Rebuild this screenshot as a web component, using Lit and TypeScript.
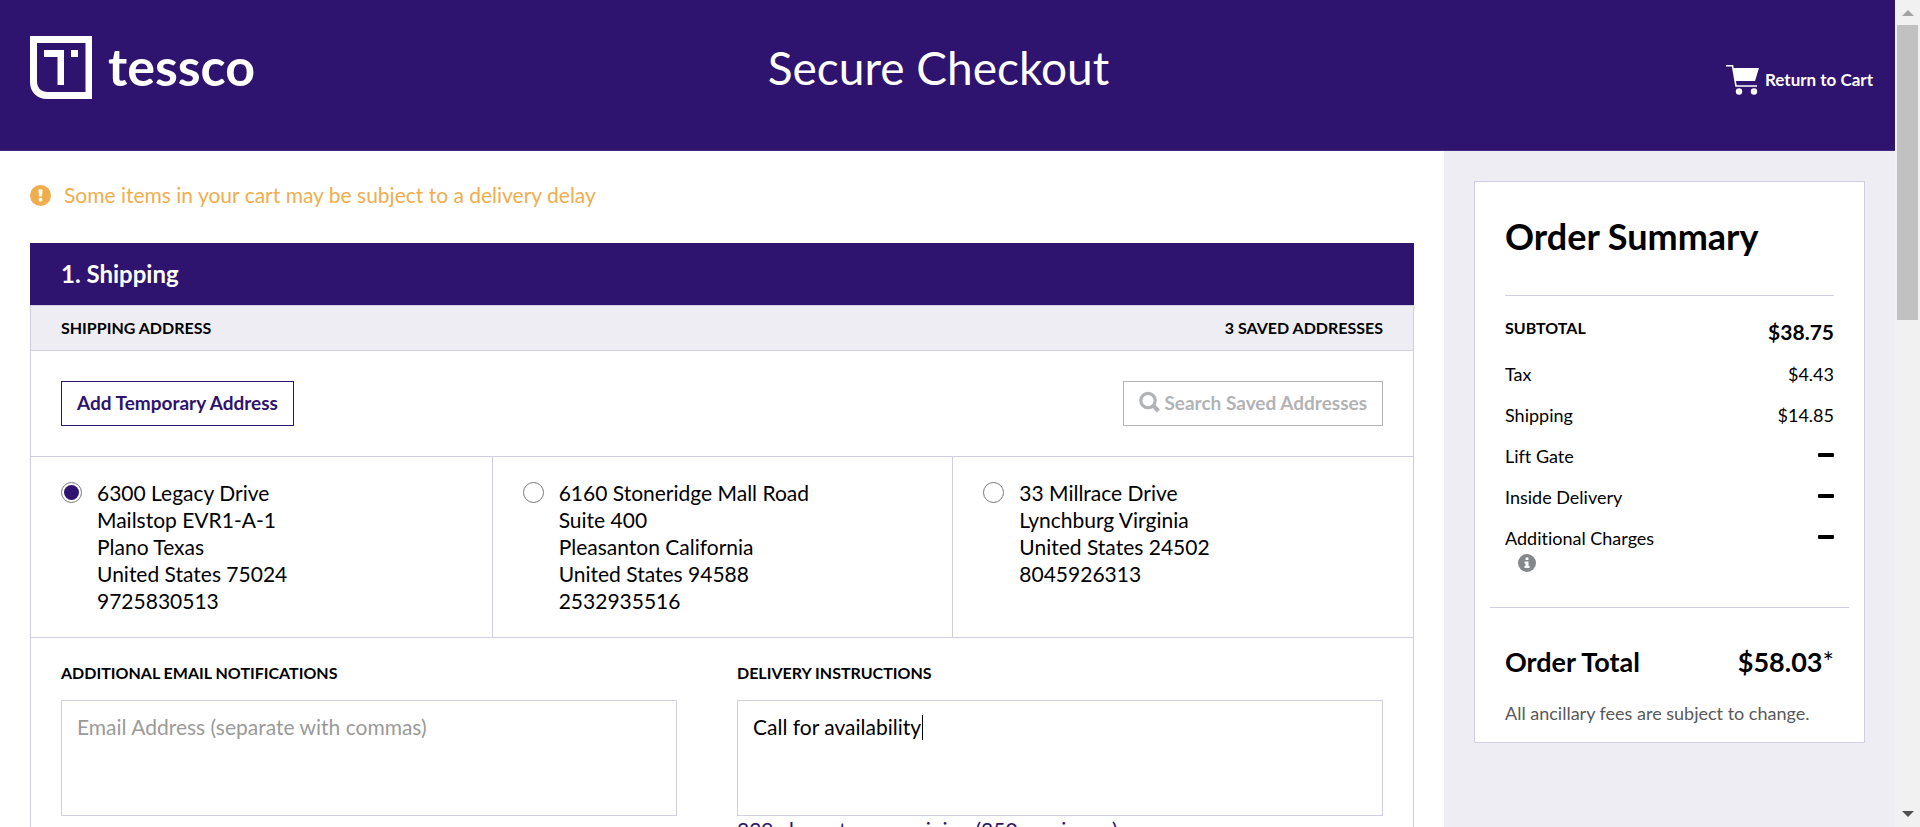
import { LitElement, html, css } from "lit";
import { customElement, query, state } from "lit/decorators.js";

interface Address {
  id: string;
  lines: string[];
}

const ADDRESSES: Address[] = [
  {
    id: "plano",
    lines: ["6300 Legacy Drive", "Mailstop EVR1-A-1", "Plano Texas", "United States 75024", "9725830513"],
  },
  {
    id: "pleasanton",
    lines: ["6160 Stoneridge Mall Road", "Suite 400", "Pleasanton California", "United States 94588", "2532935516"],
  },
  {
    id: "lynchburg",
    lines: ["33 Millrace Drive", "Lynchburg Virginia", "United States 24502", "8045926313"],
  },
];

const MAX_INSTRUCTIONS = 250;

const base = css`
  * {
    box-sizing: border-box;
  }
  h1,
  h2,
  h3,
  p,
  dl,
  dd,
  dt {
    margin: 0;
  }
  svg {
    display: block;
    flex: none;
  }
`;

@customElement("checkout-header")
export class CheckoutHeader extends LitElement {
  static styles = [
    base,
    css`
      :host {
        display: grid;
        grid-template-columns: 1fr auto 1fr;
        padding: 36px 22px 50px 30px;
        background: #2e136f;
        border-bottom: 1px solid #47297f;
        color: #fff;
      }
      .brand {
        display: flex;
        align-items: center;
        justify-self: start;
        gap: 15px;
        height: 64px;
        color: inherit;
        text-decoration: none;
        font-size: 52px;
        line-height: 60px;
        font-weight: 700;
      }
      .name {
        padding-bottom: 4px;
      }
      .title {
        padding-right: 26px;
        font-size: 46px;
        line-height: 64px;
        font-weight: 400;
      }
      .back {
        display: flex;
        align-items: center;
        justify-self: end;
        align-self: end;
        gap: 5px;
        padding-bottom: 4px;
        color: inherit;
        text-decoration: none;
        font-size: 17px;
        line-height: 32px;
        font-weight: 700;
      }
    `,
  ];

  render() {
    return html`
      <a class="brand" href="#home">
        <svg width="63" height="64" viewBox="0 0 63 64" fill="#fff" aria-hidden="true">
          <path
            fill-rule="evenodd"
            d="M0 0H62V63H17C7 63 0 56 0 46ZM7 7V45C7 52 11 56 18 56H55.500V7Z"
          />
          <path d="M14 14H34V49H27.500V21H14Z" />
          <path d="M41 14H48V21H41Z" />
        </svg>
        <span class="name">tessco</span>
      </a>
      <h1 class="title">Secure Checkout</h1>
      <a class="back" href="#cart">
        <svg width="34" height="32" viewBox="0 0 34 32" aria-hidden="true">
          <path d="M0 1.700H6.500L10 22H31" fill="none" stroke="#fff" stroke-width="1.600" />
          <path d="M7 4H33L29 17H9.300Z" fill="#fff" />
          <circle cx="13" cy="27.500" r="3.200" fill="#fff" />
          <circle cx="28" cy="27.500" r="3.200" fill="#fff" />
        </svg>
        <span>Return to Cart</span>
      </a>
    `;
  }
}

@customElement("shipping-panel")
export class ShippingPanel extends LitElement {
  @state() private selected = "plano";
  @state() private instructions = "Call for availability";
  @state() private caretOffset = 0;
  @query("#instructions") private box!: HTMLTextAreaElement;

  static styles = [
    base,
    css`
      :host {
        display: block;
      }
      .heading {
        padding: 0 31px;
        background: #2e136f;
        color: #fff;
        font-size: 24px;
        line-height: 62px;
        font-weight: 700;
      }
      .body {
        border: 1px solid #d0cee3;
        border-bottom: 0;
      }
      .subhead {
        display: flex;
        justify-content: space-between;
        padding: 0 30px;
        background: #eeedf3;
        border-bottom: 1px solid #d0cee3;
        font-size: 16px;
        line-height: 44px;
        font-weight: 700;
      }
      .tools {
        display: flex;
        justify-content: space-between;
        padding: 30px;
        border-bottom: 1px solid #d0cee3;
      }
      .btn {
        display: flex;
        align-items: center;
        gap: 4px;
        height: 45px;
        padding: 0 15px 2px;
        background: #fff;
        border: 1px solid #2e136f;
        color: #2e136f;
        font: inherit;
        font-size: 19px;
        font-weight: 700;
      }
      .btn:disabled {
        border-color: #b2b3b5;
        color: #b2b3b5;
      }
      .addresses {
        display: grid;
        grid-template-columns: repeat(3, 1fr);
        margin: 0;
        padding: 0;
        border: 0;
        border-bottom: 1px solid #d0cee3;
      }
      .address {
        display: flex;
        align-items: flex-start;
        gap: 15px;
        padding: 22px 30px 23px;
        font-size: 21px;
        line-height: 27px;
      }
      .address + .address {
        border-left: 1px solid #d0cee3;
      }
      .line {
        display: block;
      }
      .radio {
        appearance: none;
        flex: none;
        width: 21px;
        height: 21px;
        margin: 3px 0;
        padding: 2px;
        border: 1px solid #77787c;
        border-radius: 50%;
        background: #fff;
      }
      .radio:checked {
        background: #2e136f content-box;
      }
      .fields {
        display: grid;
        grid-template-columns: calc(50% - 45px) 1fr;
        gap: 60px;
        padding: 21px 30px 60px;
      }
      .label {
        display: block;
        margin-bottom: 14px;
        font-size: 16px;
        line-height: 27px;
        font-weight: 700;
      }
      .control {
        position: relative;
      }
      .area {
        display: block;
        width: 100%;
        height: 116px;
        padding: 12px 15px;
        border: 1px solid #d0cee3;
        border-radius: 0;
        outline: 0;
        resize: none;
        background: #fff;
        color: #000;
        caret-color: transparent;
        font: inherit;
        font-size: 21px;
        line-height: 27px;
      }
      .area::placeholder {
        color: #9a9a9a;
        opacity: 1;
      }
      .caret {
        position: absolute;
        top: 15px;
        width: 1px;
        height: 25px;
        background: #000;
        pointer-events: none;
      }
      .remaining {
        color: #2e136f;
        font-size: 21px;
        line-height: 27px;
      }
    `,
  ];

  firstUpdated() {
    this.placeCaret();
  }

  private placeCaret() {
    const style = getComputedStyle(this.box);
    const ctx = document.createElement("canvas").getContext("2d")!;
    ctx.font = `${style.fontWeight} ${style.fontSize} ${style.fontFamily}`;
    this.caretOffset = Math.round(16 + ctx.measureText(this.instructions).width);
  }

  private onInput(e: Event) {
    this.instructions = (e.target as HTMLTextAreaElement).value;
    this.placeCaret();
  }

  render() {
    return html`
      <h2 class="heading">1. Shipping</h2>
      <div class="body">
        <div class="subhead">
          <span>SHIPPING ADDRESS</span>
          <span>3 SAVED ADDRESSES</span>
        </div>
        <div class="tools">
          <button class="btn" type="button">Add Temporary Address</button>
          <button class="btn" type="button" disabled>
            <svg width="21" height="24" viewBox="0 0 21 24" fill="none" stroke="currentColor" aria-hidden="true">
              <circle cx="9" cy="9.500" r="7.200" stroke-width="3.200" />
              <path d="M14 14.500L19.500 20" stroke-width="4" />
            </svg>
            <span>Search Saved Addresses</span>
          </button>
        </div>
        <fieldset class="addresses" aria-label="Saved addresses">
          ${ADDRESSES.map(
            (a) => html`
              <label class="address" for=${a.id}>
                <input
                  class="radio"
                  type="radio"
                  name="address"
                  id=${a.id}
                  .checked=${this.selected === a.id}
                  @change=${() => (this.selected = a.id)}
                />
                <span>${a.lines.map((l) => html`<span class="line">${l}</span>`)}</span>
              </label>
            `
          )}
        </fieldset>
        <div class="fields">
          <div>
            <label class="label" for="emails">ADDITIONAL EMAIL NOTIFICATIONS</label>
            <textarea class="area" id="emails" placeholder="Email Address (separate with commas)"></textarea>
          </div>
          <div>
            <label class="label" for="instructions">DELIVERY INSTRUCTIONS</label>
            <div class="control">
              <textarea
                class="area"
                id="instructions"
                maxlength=${MAX_INSTRUCTIONS}
                .value=${this.instructions}
                @input=${this.onInput}
              ></textarea>
              <span class="caret" style="left:${this.caretOffset}px"></span>
            </div>
            <p class="remaining">
              ${MAX_INSTRUCTIONS - this.instructions.length} characters remaining (${MAX_INSTRUCTIONS} maximum)
            </p>
          </div>
        </div>
      </div>
    `;
  }
}

@customElement("order-summary")
export class OrderSummary extends LitElement {
  static styles = [
    base,
    css`
      :host {
        display: block;
        padding: 0 15px 15px;
        background: #fff;
        border: 1px solid #d0cee3;
      }
      .title {
        margin: 0 15px;
        padding: 30px 0 35px;
        border-bottom: 1px solid #d0cee3;
        font-size: 36px;
        line-height: 48px;
        font-weight: 700;
      }
      .rows {
        display: grid;
        gap: 20px;
        padding: 20px 15px 30px;
        font-size: 18px;
        line-height: 21px;
      }
      .row {
        display: flex;
        justify-content: space-between;
      }
      .subtotal {
        margin-bottom: -4px;
        font-size: 16px;
        line-height: 24px;
        font-weight: 700;
      }
      .amount {
        font-size: 21px;
        line-height: 32px;
      }
      .info {
        display: block;
        margin: 5px 0 5px 13px;
      }
      .dash {
        width: 16px;
        height: 4px;
        margin-top: 7px;
        border-radius: 1px;
        background: #000;
      }
      .total {
        display: flex;
        justify-content: space-between;
        padding: 38px 15px 22px;
        border-top: 1px solid #d0cee3;
        font-size: 27px;
        line-height: 32px;
        font-weight: 700;
      }
      .star {
        font-weight: 400;
      }
      .note {
        padding: 0 15px;
        color: #58595b;
        font-size: 18px;
        line-height: 27px;
      }
    `,
  ];

  private row(name: string, amount?: string) {
    return html`<div class="row">
      <dt>${name}</dt>
      ${amount ? html`<dd>${amount}</dd>` : html`<dd class="dash" aria-label="none"></dd>`}
    </div>`;
  }

  render() {
    return html`
      <h2 class="title">Order Summary</h2>
      <dl class="rows">
        <div class="row subtotal">
          <dt>SUBTOTAL</dt>
          <dd class="amount">$38.75</dd>
        </div>
        ${this.row("Tax", "$4.43")} ${this.row("Shipping", "$14.85")} ${this.row("Lift Gate")}
        ${this.row("Inside Delivery")}
        <div class="row">
          <dt>
            Additional Charges
            <svg class="info" width="18" height="18" viewBox="0 0 18 18" aria-hidden="true">
              <circle cx="9" cy="9" r="9" fill="#85888b" />
              <path d="M7.600 3.500H10.400V6H7.600ZM6.500 7.500H10.500V12H11.500V14H6.500V12H7.500V9.500H6.500Z" fill="#fff" />
            </svg>
          </dt>
          <dd class="dash" aria-label="none"></dd>
        </div>
      </dl>
      <div class="total">
        <span>Order Total</span>
        <span>$58.03<span class="star">*</span></span>
      </div>
      <p class="note">All ancillary fees are subject to change.</p>
    `;
  }
}

@customElement("app-root")
export class AppRoot extends LitElement {
  static styles = [
    base,
    css`
      :host {
        display: flex;
        height: 100vh;
        overflow: hidden;
        background: #fff;
        color: #000;
        font-family: Lato, "Liberation Sans", sans-serif;
        font-variant-ligatures: none;
      }
      .page {
        display: flex;
        flex: 1;
        flex-direction: column;
        min-width: 0;
        overflow-y: auto;
        scrollbar-width: none;
      }
      .columns {
        display: flex;
        flex: 1 0 auto;
      }
      .main {
        flex: 1;
        min-width: 0;
        padding: 29px 30px 0;
      }
      .notice {
        display: flex;
        align-items: center;
        gap: 13px;
        margin-bottom: 33px;
        color: #f0ad4e;
        font-size: 21px;
        line-height: 30px;
      }
      .aside {
        flex: none;
        width: 451px;
        padding: 30px;
        background: #eeedf3;
      }
      .scrollbar {
        display: flex;
        flex: none;
        flex-direction: column;
        align-items: center;
        width: 25px;
        padding: 10px 2px;
        background: #f1f1f1;
      }
      .thumb {
        width: 21px;
        height: 295px;
        margin: 9px 0 auto;
        background: #c1c1c1;
      }
    `,
  ];

  render() {
    return html`
      <div class="page">
        <checkout-header></checkout-header>
        <div class="columns">
          <main class="main">
            <p class="notice">
              <svg width="21" height="21" viewBox="0 0 21 21" aria-hidden="true">
                <circle cx="10.500" cy="10.500" r="10.500" fill="#f0ad4e" />
                <path d="M8.500 4.500H12.500L12 11.500H9Z" fill="#fff" />
                <circle cx="10.500" cy="14.700" r="1.900" fill="#fff" />
              </svg>
              <span>Some items in your cart may be subject to a delivery delay</span>
            </p>
            <shipping-panel></shipping-panel>
          </main>
          <aside class="aside"><order-summary></order-summary></aside>
        </div>
      </div>
      <div class="scrollbar" aria-hidden="true">
        <svg width="12" height="6" viewBox="0 0 12 6"><path d="M6 0L12 6H0Z" fill="#a3a3a3" /></svg>
        <div class="thumb"></div>
        <svg width="12" height="6" viewBox="0 0 12 6"><path d="M0 0H12L6 6Z" fill="#505050" /></svg>
      </div>
    `;
  }
}
